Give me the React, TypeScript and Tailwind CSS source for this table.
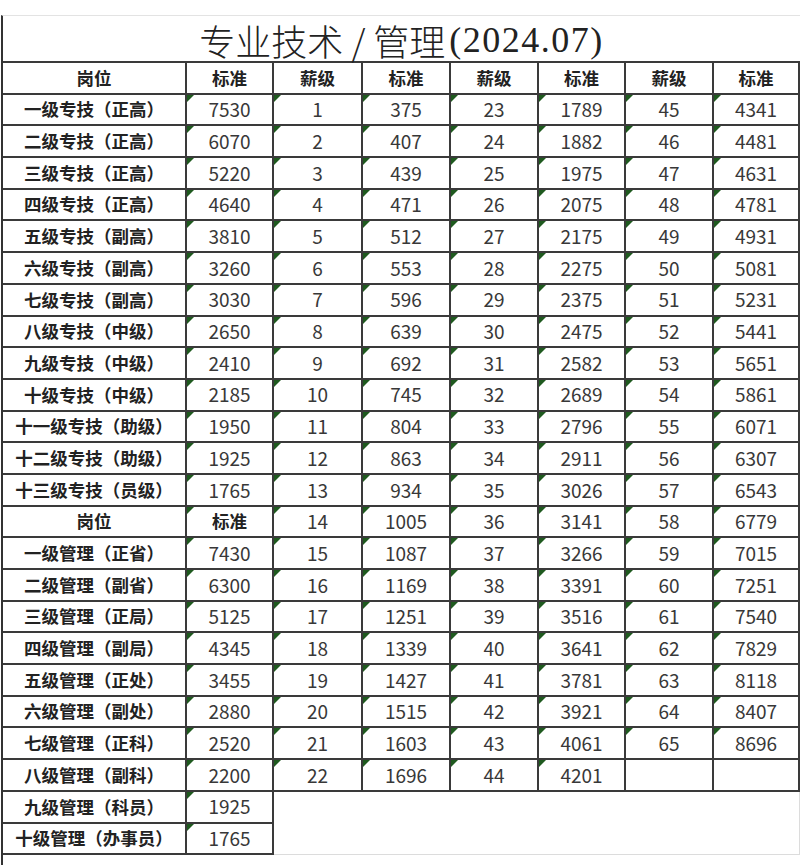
import React from 'react'

const grades: [number, number][] = [
  [1, 375], [2, 407], [3, 439], [4, 471], [5, 512], [6, 553], [7, 596], [8, 639], [9, 692], [10, 745],
  [11, 804], [12, 863], [13, 934], [14, 1005], [15, 1087], [16, 1169], [17, 1251], [18, 1339], [19, 1427],
  [20, 1515], [21, 1603], [22, 1696], [23, 1789], [24, 1882], [25, 1975], [26, 2075], [27, 2175], [28, 2275],
  [29, 2375], [30, 2475], [31, 2582], [32, 2689], [33, 2796], [34, 2911], [35, 3026], [36, 3141], [37, 3266],
  [38, 3391], [39, 3516], [40, 3641], [41, 3781], [42, 3921], [43, 4061], [44, 4201], [45, 4341], [46, 4481],
  [47, 4631], [48, 4781], [49, 4931], [50, 5081], [51, 5231], [52, 5441], [53, 5651], [54, 5861], [55, 6071],
  [56, 6307], [57, 6543], [58, 6779], [59, 7015], [60, 7251], [61, 7540], [62, 7829], [63, 8118], [64, 8407],
  [65, 8696],
]

// 岗位 / 标准 rows, null marks the second header row
const posts: ([string, string] | null)[] = [
  ['一级专技（正高）', '7530'],
  ['二级专技（正高）', '6070'],
  ['三级专技（正高）', '5220'],
  ['四级专技（正高）', '4640'],
  ['五级专技（副高）', '3810'],
  ['六级专技（副高）', '3260'],
  ['七级专技（副高）', '3030'],
  ['八级专技（中级）', '2650'],
  ['九级专技（中级）', '2410'],
  ['十级专技（中级）', '2185'],
  ['十一级专技（助级）', '1950'],
  ['十二级专技（助级）', '1925'],
  ['十三级专技（员级）', '1765'],
  null,
  ['一级管理（正省）', '7430'],
  ['二级管理（副省）', '6300'],
  ['三级管理（正局）', '5125'],
  ['四级管理（副局）', '4345'],
  ['五级管理（正处）', '3455'],
  ['六级管理（副处）', '2880'],
  ['七级管理（正科）', '2520'],
  ['八级管理（副科）', '2200'],
  ['九级管理（科员）', '1925'],
  ['十级管理（办事员）', '1765'],
]

const colWidths = [183, 87, 89, 88, 88, 87, 88, 86]
const cell = 'border-2 border-[#3a3a3a] text-center align-middle p-0'
const sans = { fontFamily: '"Noto Sans CJK SC", "Noto Sans", sans-serif' }

function Flag() {
  return (
    <span className="absolute left-0 top-0 w-0 h-0 border-t-[7px] border-r-[7px] border-t-[#1f5a1f] border-r-transparent" />
  )
}

function NumCell({ value, flag = true }: { value?: string | number; flag?: boolean }) {
  return (
    <td className={`${cell} relative text-[19px] text-[#383838]`}>
      {flag && value !== undefined && <Flag />}
      {value}
    </td>
  )
}

export default function App() {
  return (
    <div className="w-[800px] h-[865px] bg-white overflow-hidden" style={sans}>
      <div className="mt-[15px] ml-[1px] h-[850px] border-t border-t-[#e3e3e3] border-l-2 border-l-[#333]">
        {/* Title */}
        <div className="h-[45px] flex items-center justify-center pt-[3px] text-[36px] text-[#222] leading-none">
          <span className="font-light">专业技术 / 管理</span>
          <span className="ml-[4px] tracking-[1.5px]" style={{ fontFamily: '"Liberation Serif", serif' }}>
            (2024.07)
          </span>
        </div>

        {/* Table */}
        <table className="border-collapse table-fixed w-[796px]">
          <colgroup>
            {colWidths.map((w, i) => (
              <col key={i} style={{ width: w }} />
            ))}
          </colgroup>
          <tbody>
            <tr className="h-[31.7px]">
              <th className={`${cell} border-l-0 text-[17.5px] font-bold text-[#222]`}>岗位</th>
              {['标准', '薪级', '标准', '薪级', '标准', '薪级', '标准'].map((h, i) => (
                <th key={i} className={`${cell} text-[17.5px] font-bold text-[#222]`}>{h}</th>
              ))}
            </tr>
            {posts.map((p, i) => {
              const a = grades[i]
              const b = grades[i + 22]
              const c = grades[i + 44]
              const extra = i < 22
              return (
                <tr key={i} className="h-[31.7px]">
                  <td className={`${cell} border-l-0 text-[17.5px] font-bold text-[#222] whitespace-nowrap`}>
                    {p ? p[0] : '岗位'}
                  </td>
                  {p ? (
                    <NumCell value={p[1]} />
                  ) : (
                    <td className={`${cell} relative text-[17.5px] font-bold text-[#222]`}>
                      <Flag />
                      标准
                    </td>
                  )}
                  {extra && (
                    <>
                      <NumCell value={a[0]} />
                      <NumCell value={a[1]} />
                      <NumCell value={b[0]} />
                      <NumCell value={b[1]} />
                      <NumCell value={c ? c[0] : undefined} />
                      <NumCell value={c ? c[1] : undefined} />
                    </>
                  )}
                  {i === 22 && (
                    <td
                      colSpan={6}
                      rowSpan={2}
                      className="border-b border-b-[#dcdcdc] border-r border-r-[#dcdcdc] border-t-0 border-l-0"
                    />
                  )}
                </tr>
              )
            })}
          </tbody>
        </table>
      </div>
    </div>
  )
}
